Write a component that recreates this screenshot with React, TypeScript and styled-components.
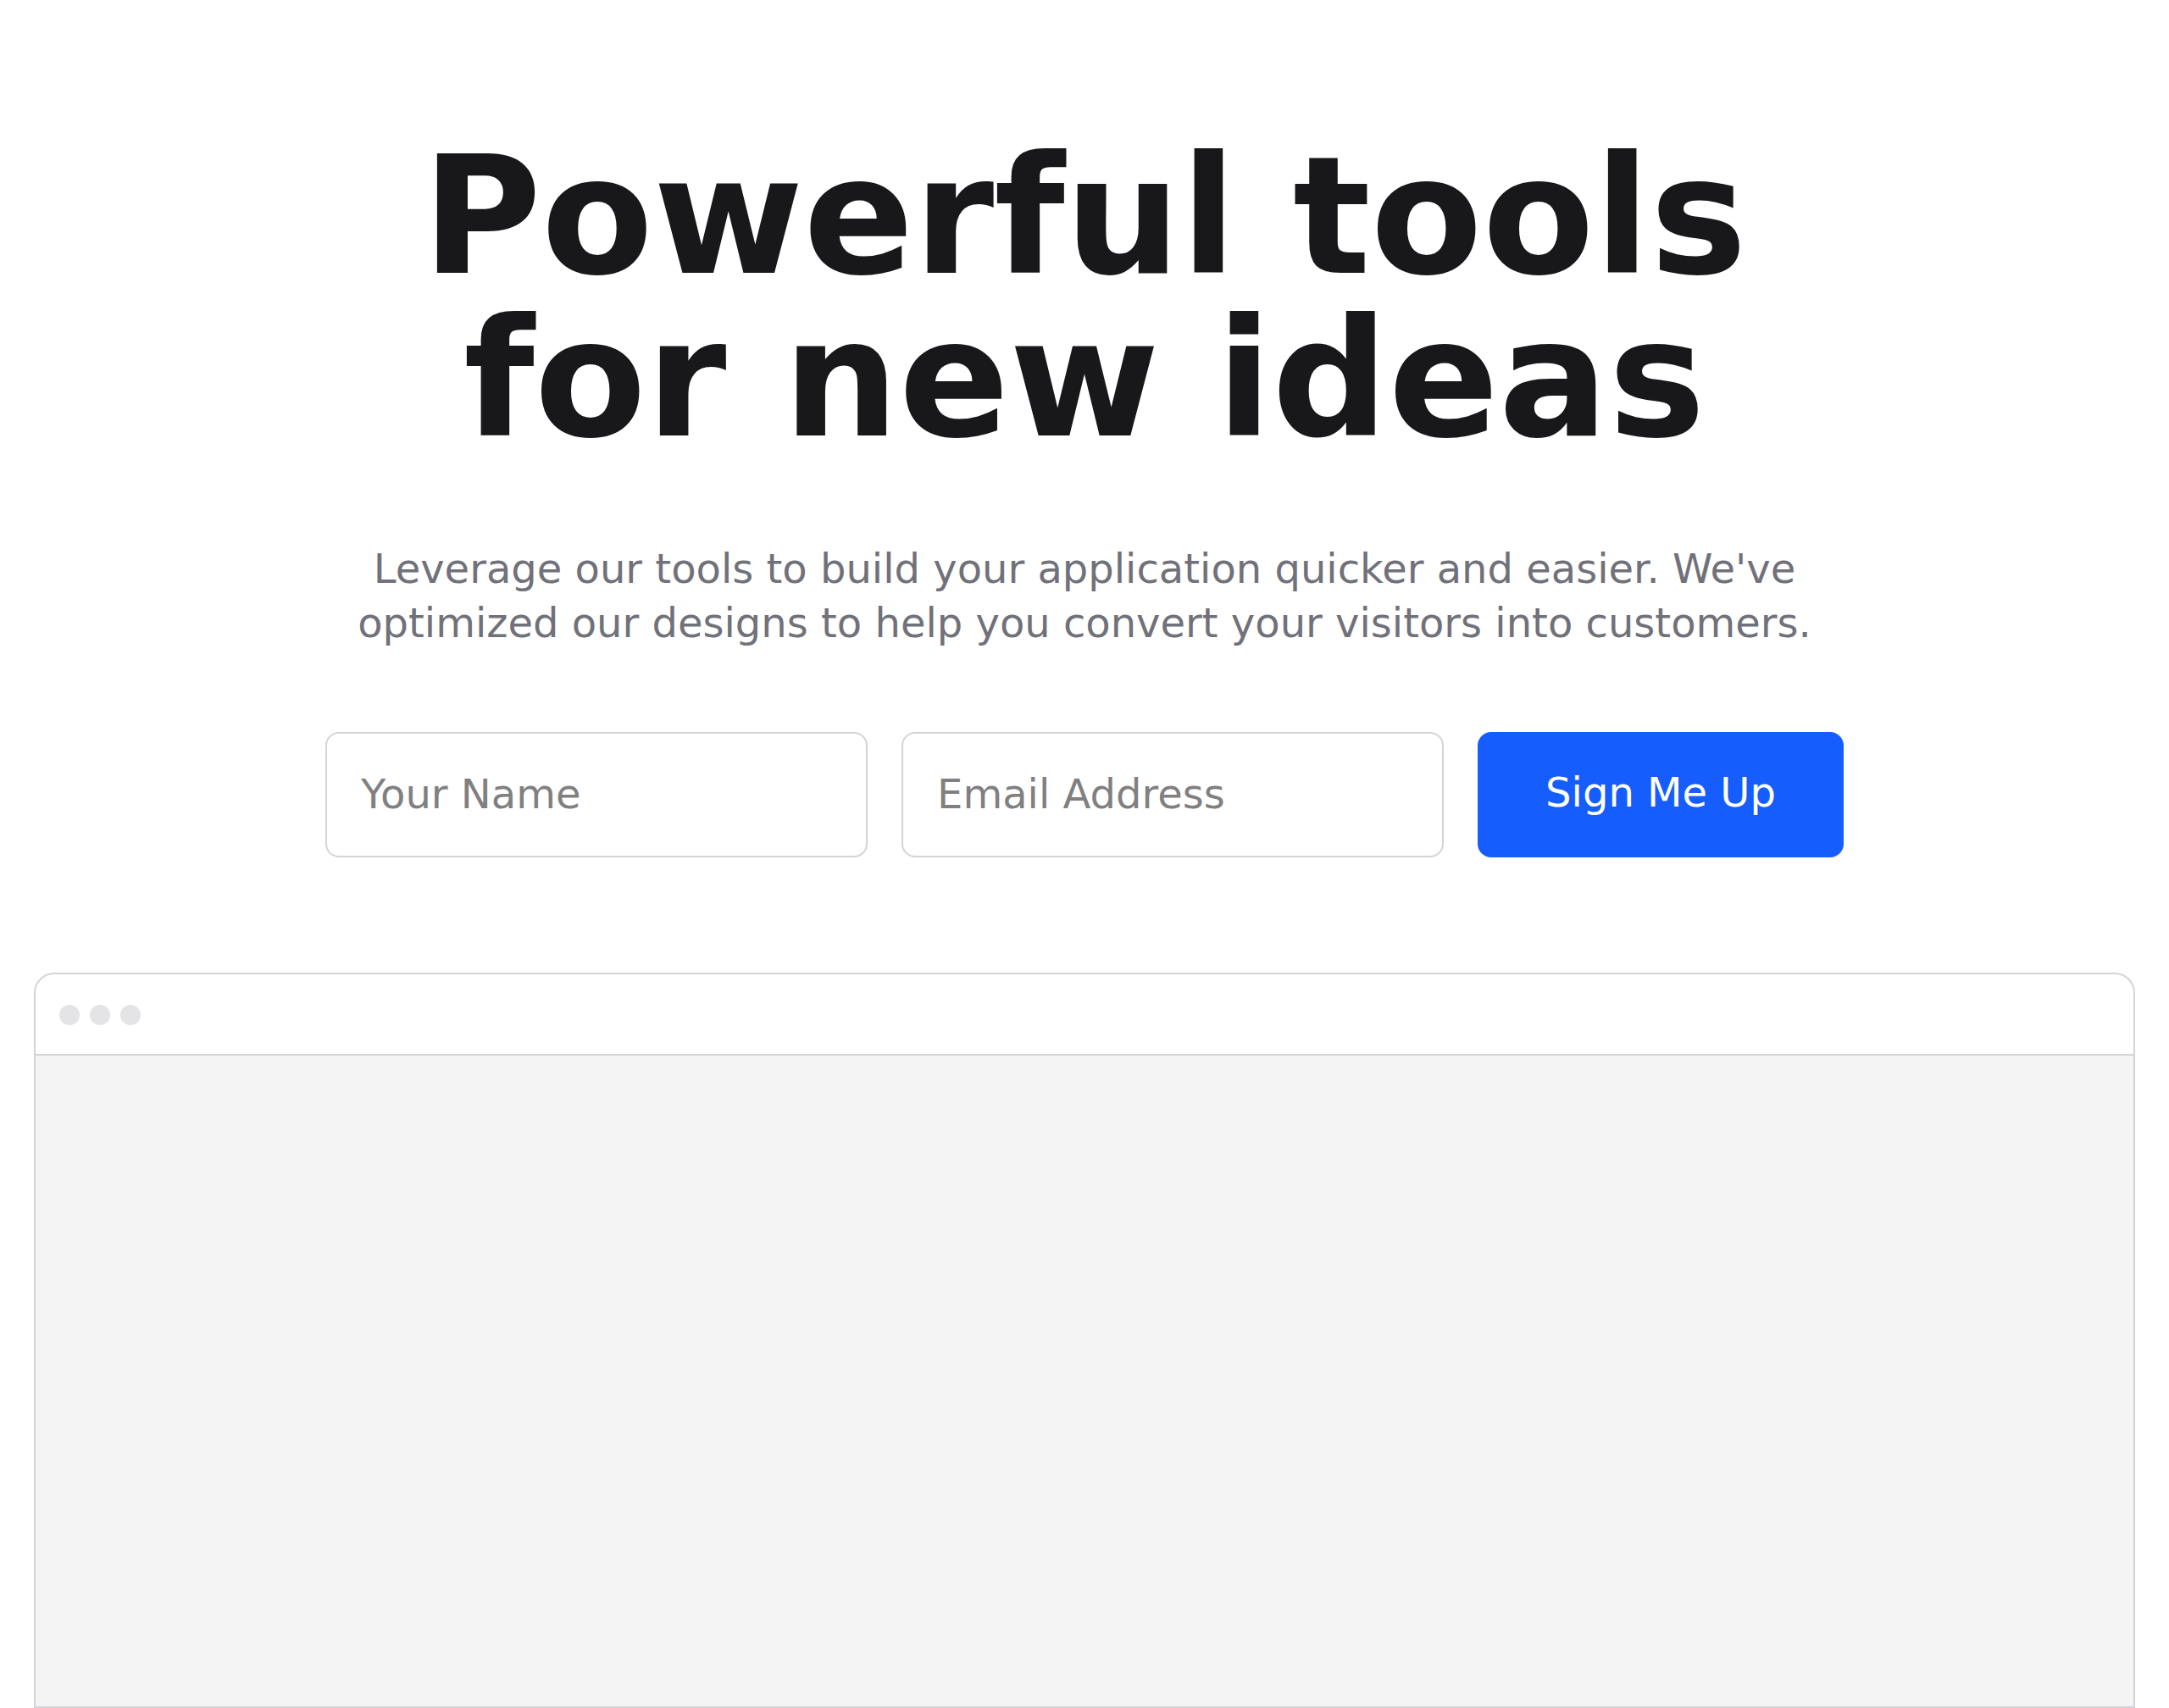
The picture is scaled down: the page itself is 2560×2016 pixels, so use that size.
import styled, { createGlobalStyle } from 'styled-components'

const App = () => {
  return (
    <>
      <GlobalStyle />
      <Hero>
        <Title>
          Powerful tools
          <br />
          for new ideas
        </Title>
        <Lead>
          Leverage our tools to build your application quicker and easier. We've optimized our
          designs to help you convert your visitors into customers.
        </Lead>
        <SignUpForm onSubmit={(e) => e.preventDefault()}>
          <Input type="text" name="name" placeholder="Your Name" aria-label="Your Name" />
          <Input
            type="email"
            name="email"
            placeholder="Email Address"
            aria-label="Email Address"
          />
          <Button type="submit">Sign Me Up</Button>
        </SignUpForm>
        <BrowserWindow>
          <BrowserBar>
            <Dot />
            <Dot />
            <Dot />
          </BrowserBar>
          <BrowserBody />
        </BrowserWindow>
      </Hero>
    </>
  )
}

const GlobalStyle = createGlobalStyle`
  body {
    margin: 0;
    background: #fff;
    font-family: 'DejaVu Sans', sans-serif;
  }

  *,
  *::before,
  *::after {
    box-sizing: border-box;
  }
`

const Hero = styled.section`
  display: flex;
  flex-direction: column;
  align-items: center;
  padding: 160px 40px 0;
`

const Title = styled.h1`
  margin: 0;
  color: #18181b;
  font-size: 192px;
  font-weight: 700;
  line-height: 192px;
  text-align: center;
`

const Lead = styled.p`
  max-width: 1792px;
  margin: 0;
  padding: 95px 0 97px;
  color: #71717a;
  font-size: 48px;
  line-height: 64px;
  text-align: center;
`

const SignUpForm = styled.form`
  display: flex;
  gap: 40px;
  max-width: 100%;
`

const Input = styled.input`
  width: 640px;
  min-width: 0;
  height: 148px;
  padding: 0 40px 2px;
  border: 2px solid #d4d4d8;
  border-radius: 16px;
  background: #fff;
  color: #18181b;
  font-family: inherit;
  font-size: 48px;

  &::placeholder {
    color: #808080;
  }
`

const Button = styled.button`
  flex-shrink: 0;
  height: 148px;
  padding: 0 80px 6px;
  border: none;
  border-radius: 16px;
  background: #155dfc;
  color: #fff;
  font-family: inherit;
  font-size: 48px;
  cursor: pointer;

  &:hover {
    background: #1447e6;
  }
`

const BrowserWindow = styled.div`
  width: 100%;
  margin-top: 136px;
  border: 2px solid #d4d4d8;
  border-radius: 24px 24px 0 0;
  overflow: hidden;
`

const BrowserBar = styled.div`
  display: flex;
  gap: 12px;
  padding: 36px 28px 34px;
  border-bottom: 2px solid #d4d4d8;
`

const Dot = styled.span`
  width: 24px;
  height: 24px;
  border-radius: 50%;
  background: #e4e4e7;
`

const BrowserBody = styled.div`
  height: 768px;
  background: #f4f4f4;
`

export default App
